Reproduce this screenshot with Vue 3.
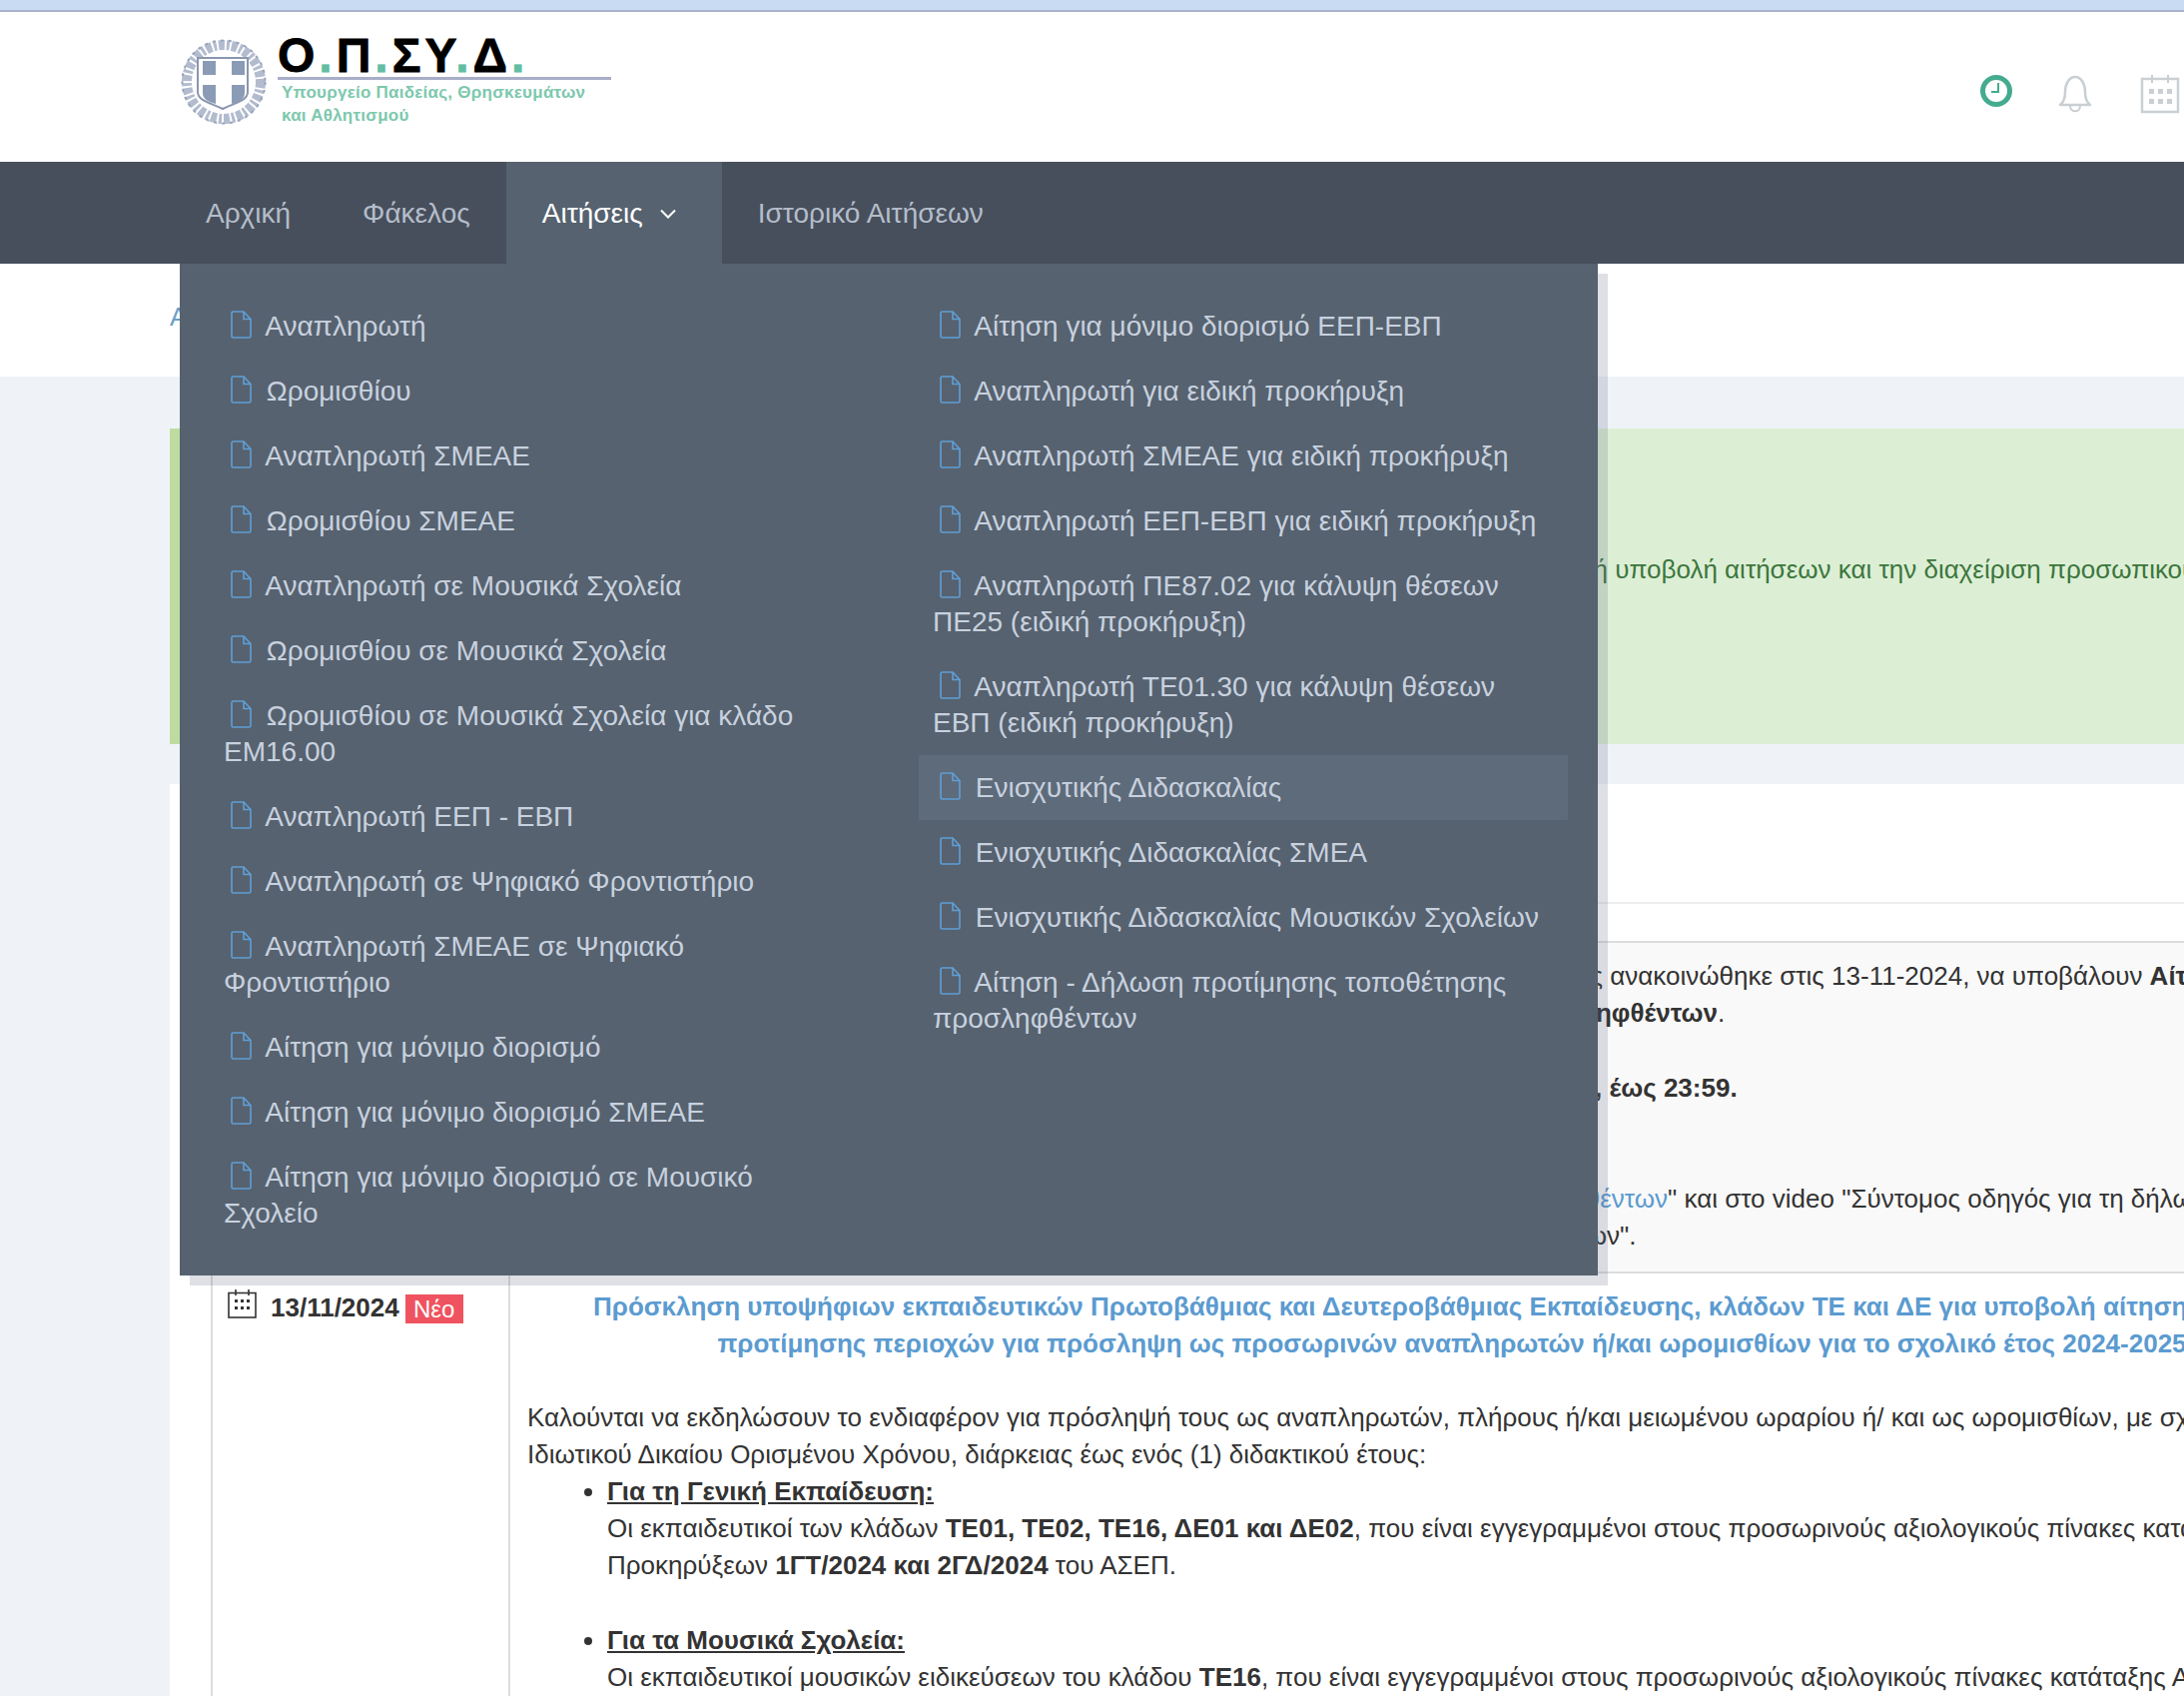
<script setup>
const navItems = [
  { label: 'Αρχική' },
  { label: 'Φάκελος' },
  { label: 'Αιτήσεις', active: true },
  { label: 'Ιστορικό Αιτήσεων' }
]

const leftMenu = [
  'Αναπληρωτή',
  'Ωρομισθίου',
  'Αναπληρωτή ΣΜΕΑΕ',
  'Ωρομισθίου ΣΜΕΑΕ',
  'Αναπληρωτή σε Μουσικά Σχολεία',
  'Ωρομισθίου σε Μουσικά Σχολεία',
  'Ωρομισθίου σε Μουσικά Σχολεία για κλάδο ΕΜ16.00',
  'Αναπληρωτή ΕΕΠ - ΕΒΠ',
  'Αναπληρωτή σε Ψηφιακό Φροντιστήριο',
  'Αναπληρωτή ΣΜΕΑΕ σε Ψηφιακό Φροντιστήριο',
  'Αίτηση για μόνιμο διορισμό',
  'Αίτηση για μόνιμο διορισμό ΣΜΕΑΕ',
  'Αίτηση για μόνιμο διορισμό σε Μουσικό Σχολείο'
]

const rightMenu = [
  'Αίτηση για μόνιμο διορισμό ΕΕΠ-ΕΒΠ',
  'Αναπληρωτή για ειδική προκήρυξη',
  'Αναπληρωτή ΣΜΕΑΕ για ειδική προκήρυξη',
  'Αναπληρωτή ΕΕΠ-ΕΒΠ για ειδική προκήρυξη',
  'Αναπληρωτή ΠΕ87.02 για κάλυψη θέσεων ΠΕ25 (ειδική προκήρυξη)',
  'Αναπληρωτή ΤΕ01.30 για κάλυψη θέσεων ΕΒΠ (ειδική προκήρυξη)',
  'Ενισχυτικής Διδασκαλίας',
  'Ενισχυτικής Διδασκαλίας ΣΜΕΑ',
  'Ενισχυτικής Διδασκαλίας Μουσικών Σχολείων',
  'Αίτηση - Δήλωση προτίμησης τοποθέτησης προσληφθέντων'
]

const columns = [leftMenu, rightMenu]
const hovered = 'Ενισχυτικής Διδασκαλίας'
</script>

<template>
  <div class="page">
    <div class="top-strip"></div>

    <header class="header">
      <div class="logo">
        <svg class="emblem" viewBox="0 0 88 88" width="88" height="88">
          <circle cx="44" cy="44" r="37" fill="none" stroke="#b3bccf" stroke-width="10" stroke-dasharray="6 2 3 2" />
          <circle cx="44" cy="44" r="41.500" fill="none" stroke="#98a4bc" stroke-width="2" stroke-dasharray="3 5" />
          <path d="M18 20h50v34c0 9-13 11-25 17-12-6-25-8-25-17z" fill="#fff" stroke="#8a96b0" stroke-width="2" />
          <path d="M23 23h13v14H23zM52 23h13v14H52z" fill="#8b9bb5" />
          <path d="M23 47h13v19c-6-2-13-4-13-11zM52 47h13v8c0 7-7 9-13 11z" fill="#8b9bb5" />
        </svg>
        <div class="logo-text">
          <div class="logo-name">Ο<i>.</i>Π<i>.</i>ΣΥ<i>.</i>Δ<i>.</i></div>
          <div class="logo-sub">Υπουργείο Παιδείας, Θρησκευμάτων<br />και Αθλητισμού</div>
        </div>
      </div>
      <div class="header-icons">
        <svg viewBox="0 0 34 34" width="34" height="34">
          <circle cx="17" cy="17" r="13.500" fill="none" stroke="#44ab8f" stroke-width="5" />
          <path d="M19 9v9h-7" fill="none" stroke="#44ab8f" stroke-width="2" />
        </svg>
        <svg class="icon-low" viewBox="0 0 34 40" width="34" height="40">
          <path d="M2 31c4-3 5-7 5-13 0-8 4-15 10-15s10 7 10 15c0 6 1 10 5 13z" fill="none" stroke="#c9cfd3" stroke-width="2.500" stroke-linejoin="round" />
          <path d="M12 32c0 7 10 7 10 0" fill="none" stroke="#c9cfd3" stroke-width="2" />
        </svg>
        <svg class="icon-low icon-cal" viewBox="0 0 40 40" width="40" height="40">
          <rect x="2" y="5" width="36" height="33" fill="none" stroke="#c9cfd3" stroke-width="2.500" />
          <path d="M12 1v8M28 1v8" stroke="#c9cfd3" stroke-width="2" />
          <path d="M9 15h5v5H9zM18 15h5v5h-5zM27 15h5v5h-5zM9 25h5v5H9zM18 25h5v5h-5zM27 25h5v5h-5z" fill="#c9cfd3" />
        </svg>
      </div>
    </header>

    <nav class="nav">
      <a v-for="item in navItems" :key="item.label" class="nav-item" :class="{ active: item.active }">
        {{ item.label }}
        <svg v-if="item.active" class="chevron" viewBox="0 0 18 10" width="18" height="10">
          <path d="M2 1.500l7 7 7-7" fill="none" stroke="#fff" stroke-width="2" />
        </svg>
      </a>

      <div class="dropdown">
        <ul v-for="(col, i) in columns" :key="i" class="dropdown-col">
          <li v-for="entry in col" :key="entry" class="dropdown-item" :class="{ hover: entry === hovered }">
            <svg class="file-icon" viewBox="0 0 21 28" width="21" height="28">
              <path d="M2.500 1h10.500l7 7.500v17a1.500 1.500 0 0 1-1.500 1.500h-16a1.500 1.500 0 0 1-1.500-1.500v-23a1.500 1.500 0 0 1 1.500-1.500zM13 1v7.500h7" fill="none" stroke="#5f9fd6" stroke-width="1.600" />
            </svg>
            {{ entry }}
          </li>
        </ul>
      </div>
    </nav>

    <div class="breadcrumb">Αρχική</div>

    <main class="content">
      <div class="alert">
        <span class="alert-lead">Καλώς ήρθατε στο Ολοκληρωμένο Πληροφοριακό Σύστημα για την ηλεκτρονική</span> υποβολή αιτήσεων και την διαχείριση προσωπικού φακέλου
      </div>

      <section class="panel">
        <div class="panel-head"></div>
        <div class="table-head"></div>

        <div class="row row-first">
          <div class="cell-date"></div>
          <div class="cell-body">
            <div class="line"><span class="lead lead-a">που ο πίνακας προσληφθέντων όπως</span> ανακοινώθηκε στις 13-11-2024, να υποβάλουν <b>Αίτηση - Δήλωση</b></div>
            <div class="line"><span class="lead lead-b"><b>τοποθέτησης προσληφθέντων</b></span>.</div>
            <div class="line line-gap"><span class="lead lead-c"><b>από 14-11-2024 έως 18-11-2024</b></span><b>, έως 23:59.</b></div>
            <div class="line line-gap2"><span class="lead lead-d"><span class="link">οδηγίες δήλωσης τοποθέτησης προσληφθέντων</span></span>" και στο video "Σύντομος οδηγός για τη δήλωση</div>
            <div class="line"><span class="lead lead-e">προτίμησης τοποθέτησης προσληφθέντων</span>".</div>
          </div>
        </div>

        <div class="row">
          <div class="cell-date">
            <svg class="cal-icon" viewBox="0 0 29 29" width="29" height="29">
              <rect x="1" y="3.500" width="27" height="24.500" fill="none" stroke="#333" stroke-width="1.600" />
              <path d="M8 0v6M21 0v6" stroke="#333" stroke-width="1.600" />
              <path d="M7 10h3v3H7zM13 10h3v3h-3zM19 10h3v3h-3zM7 17h3v3H7zM13 17h3v3h-3zM19 17h3v3h-3z" fill="#333" />
            </svg>
            <b class="date">13/11/2024</b>
            <span class="badge">Νέο</span>
          </div>
          <div class="cell-body">
            <div class="title">
              Πρόσκληση υποψήφιων εκπαιδευτικών Πρωτοβάθμιας και Δευτεροβάθμιας Εκπαίδευσης, κλάδων ΤΕ και ΔΕ για υποβολή αίτηση-δήλωσης<br />
              προτίμησης περιοχών για πρόσληψη ως προσωρινών αναπληρωτών ή/και ωρομισθίων για το σχολικό έτος 2024-2025
            </div>
            <div class="line">Καλούνται να εκδηλώσουν το ενδιαφέρον για πρόσληψή τους ως αναπληρωτών, πλήρους ή/και μειωμένου ωραρίου ή/ και ως ωρομισθίων, με σχέση εργασίας</div>
            <div class="line">Ιδιωτικού Δικαίου Ορισμένου Χρόνου, διάρκειας έως ενός (1) διδακτικού έτους:</div>
            <ul class="bullets">
              <li>
                <div class="line"><b><u>Για τη Γενική Εκπαίδευση:</u></b></div>
                <div class="line">Οι εκπαιδευτικοί των κλάδων <b>ΤΕ01, ΤΕ02, ΤΕ16, ΔΕ01 και ΔΕ02</b>, που είναι εγγεγραμμένοι στους προσωρινούς αξιολογικούς πίνακες κατάταξης</div>
                <div class="line">Προκηρύξεων <b>1ΓΤ/2024 και 2ΓΔ/2024</b> του ΑΣΕΠ.</div>
              </li>
              <li>
                <div class="line"><b><u>Για τα Μουσικά Σχολεία:</u></b></div>
                <div class="line">Οι εκπαιδευτικοί μουσικών ειδικεύσεων του κλάδου <b>ΤΕ16</b>, που είναι εγγεγραμμένοι στους προσωρινούς αξιολογικούς πίνακες κατάταξης Α</div>
              </li>
            </ul>
          </div>
        </div>
      </section>
    </main>
  </div>
</template>

<style>
body {
  margin: 0;
  background: #eff3f8;
}
</style>

<style scoped>
.page {
  height: 100vh;
  overflow: hidden;
  font-family: "Liberation Sans", Arial, sans-serif;
  font-size: 26px;
  color: #333;
  background: #eff3f8;
}

.top-strip {
  height: 10px;
  background: #c9daf3;
  border-bottom: 2px solid #a9b4cc;
}

.header {
  height: 150px;
  background: #fff;
  display: flex;
  align-items: center;
  justify-content: space-between;
  padding: 0 4px 0 180px;
}

.logo {
  display: flex;
  align-items: flex-start;
  gap: 10px;
  align-self: flex-start;
  margin-top: 26px;
}

.emblem {
  filter: blur(0.5px);
}

.logo-text {
  margin-top: -3px;
  color: #000;
}

.logo-name {
  font-size: 48px;
  font-weight: 700;
  line-height: 42px;
  letter-spacing: 4px;
  width: 334px;
  height: 42px;
  border-bottom: 3px solid #a8adc8;
  -webkit-text-stroke: 0.8px #000;
}

.logo-name i {
  font-style: normal;
  color: #62bda3;
  -webkit-text-stroke: 0.8px #62bda3;
}

.logo-sub {
  margin: 1px 0 0 4px;
  font-size: 17px;
  font-weight: 700;
  line-height: 23px;
  letter-spacing: 0.25px;
  color: #7dc8ad;
}

.header-icons {
  display: flex;
  align-items: center;
  gap: 45px;
  padding-top: 8px;
}

.icon-low {
  margin-top: 6px;
}

.icon-cal {
  margin-left: 3px;
}

.nav {
  position: relative;
  height: 102px;
  padding-left: 170px;
  display: flex;
  background: #474f5c;
}

.nav-item {
  display: flex;
  align-items: center;
  gap: 16px;
  padding: 2px 36px 0;
  font-size: 28px;
  color: #b4bdca;
}

.nav-item.active {
  padding-right: 45px;
  background: #56626f;
  color: #fff;
}

.dropdown {
  position: absolute;
  top: 102px;
  left: 180px;
  z-index: 10;
  width: 1420px;
  height: 1013px;
  box-sizing: border-box;
  padding: 30px;
  display: grid;
  grid-template-columns: 650px 650px;
  column-gap: 60px;
  background: #56626f;
  box-shadow: 10px 10px 0 rgba(90, 100, 130, 0.2);
}

.dropdown-col {
  list-style: none;
  margin: 0;
  padding: 0;
}

.dropdown-item {
  padding: 15px 15px 14px 14px;
  font-size: 28px;
  line-height: 36px;
  color: #c8d1df;
}

.dropdown-item.hover {
  background: #5e6b7a;
}

.file-icon {
  vertical-align: -3px;
  margin: 0 7px;
}

.breadcrumb {
  height: 113px;
  background: #fff;
  padding: 38px 0 0 170px;
  box-sizing: border-box;
  color: #6b9fc6;
}

.content {
  padding: 52px 0 0 170px;
}

.alert {
  height: 316px;
  box-sizing: border-box;
  border-left: 10px solid #bedca0;
  background: #dcefd5;
  padding: 123px 0 0 20px;
  line-height: 37px;
  color: #3c763d;
  white-space: nowrap;
}

.alert-lead {
  display: inline-block;
  width: 1410px;
  text-align: right;
}

.panel {
  margin-top: 40px;
  background: #fff;
  padding-left: 41px;
  height: 920px;
}

.panel-head {
  height: 118px;
  border-bottom: 2px solid #eee;
}

.table-head {
  height: 37px;
  border-bottom: 2px solid #ddd;
}

.row {
  display: flex;
  border-bottom: 2px solid #ddd;
}

.row-first {
  height: 329px;
  background: #f9f9f9;
}

.cell-date {
  flex: none;
  width: 298px;
  box-sizing: border-box;
  border-left: 2px solid #ddd;
  padding: 16px 0 0 15px;
  display: flex;
  align-items: flex-start;
}

.cal-icon {
  flex: none;
  margin: 0 14px 0 0;
}

.date {
  font-size: 26px;
  line-height: 37px;
}

.badge {
  margin: 5px 0 0 6px;
  width: 58px;
  height: 29px;
  line-height: 30px;
  text-align: center;
  background: #ef5360;
  color: #fff;
  font-size: 24px;
}

.cell-body {
  flex: 1;
  min-width: 0;
  box-sizing: border-box;
  border-left: 2px solid #ddd;
  padding: 15px 0 0 17px;
  white-space: nowrap;
}

.line {
  line-height: 37px;
}

.line-gap {
  margin-top: 38px;
}

.line-gap2 {
  margin-top: 74px;
}

.lead {
  display: inline-block;
  text-align: right;
}

.lead-a {
  width: 1077px;
}

.lead-b {
  width: 1192px;
}

.lead-c {
  width: 1069px;
}

.lead-d {
  width: 1142px;
}

.lead-e {
  width: 1094px;
}

.link {
  color: #5b9bd0;
}

.title {
  width: 1852px;
  text-align: center;
  font-weight: 700;
  line-height: 37px;
  color: #5b9bd0;
  margin-bottom: 37px;
}

.bullets {
  margin: 0;
  padding: 0 0 0 80px;
}

.bullets li {
  margin-bottom: 38px;
}
</style>
